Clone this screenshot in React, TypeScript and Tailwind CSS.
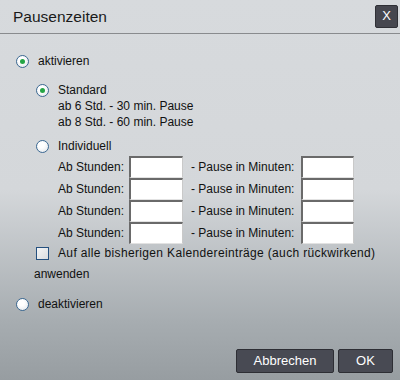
import React from 'react';

const Radio = ({ checked }: { checked?: boolean }) => (
  <span className="flex h-[13px] w-[13px] shrink-0 items-center justify-center rounded-full border border-[#3b6892] bg-[radial-gradient(circle_at_40%_35%,#ffffff_30%,#dfe3e7_100%)]">
    {checked && <span className="h-[5px] w-[5px] rounded-full bg-[#25a545]" />}
  </span>
);

const Field = ({ w }: { w: string }) => (
  <div
    className={`${w} h-[22px] border-t-2 border-l-2 border-r border-b border-t-[#6a6a6a] border-l-[#6a6a6a] border-r-[#c9c9c9] border-b-[#e2e2e2] bg-white`}
  />
);

const HourRow = () => (
  <div className="flex h-[22px] items-center">
    <span className="w-[71px]">Ab Stunden:</span>
    <Field w="w-[54px]" />
    <span className="ml-[8px] w-[110px]">- Pause in Minuten:</span>
    <Field w="w-[53px]" />
  </div>
);

export default function App() {
  return (
    <div className="flex h-[380px] w-[400px] flex-col overflow-hidden bg-[linear-gradient(to_bottom,#d7dadd_0%,#d4d7da_50%,#a6acb0_85%,#979da1_100%)] font-['Liberation_Sans',Arial,sans-serif] text-[12px] text-[#111]">
      {/* title bar */}
      <div className="flex h-[34px] shrink-0 items-center justify-between border-b border-[#898b8e] pl-[13px] pr-[2px]">
        <span className="text-[15.5px] text-[#1a1a1a]">Pausenzeiten</span>
        <button className="mb-[1px] flex h-[23px] w-[23px] items-center justify-center rounded-[2px] border border-[#2f3036] bg-[#46474f] text-[13px] text-white">
          X
        </button>
      </div>

      <div className="flex flex-1 flex-col px-[16px]">
        <div className="mt-[19px] flex h-[16px] items-center gap-[9px]">
          <Radio checked />
          <span>aktivieren</span>
        </div>

        <div className="ml-[20px]">
          <div className="mt-[13px] flex h-[16px] items-center gap-[9px]">
            <Radio checked />
            <span>Standard</span>
          </div>
          <div className="pl-[22px]">
            <div className="flex h-[16px] items-center">ab 6 Std. - 30 min. Pause</div>
            <div className="flex h-[16px] items-center">ab 8 Std. - 60 min. Pause</div>
          </div>

          <div className="mt-[8px] flex h-[16px] items-center gap-[9px]">
            <Radio />
            <span>Individuell</span>
          </div>
          <div className="mt-[2px] pl-[22px]">
            <HourRow />
            <HourRow />
            <HourRow />
            <HourRow />
          </div>

          <div className="mt-[1px] flex h-[16px] items-center gap-[9px]">
            <span className="h-[13px] w-[13px] shrink-0 border border-[#24507f] bg-[linear-gradient(135deg,#f4f5f6,#d9dcdf)]" />
            <span className="tracking-[0.35px]">Auf alle bisherigen Kalendereinträge (auch rückwirkend)</span>
          </div>
        </div>
        <div className="mt-[5px] flex h-[16px] items-center pl-[18px]">anwenden</div>

        <div className="mt-[14px] flex h-[16px] items-center gap-[9px]">
          <Radio />
          <span>deaktivieren</span>
        </div>

        <div className="mt-auto mb-[7px] mr-[-9px] flex justify-end gap-[4px]">
          <button className="flex h-[24px] w-[98px] items-center justify-center rounded-[2px] border border-[#2d2e34] bg-[#484a53] text-[13px] text-white">
            Abbrechen
          </button>
          <button className="flex h-[24px] w-[55px] items-center justify-center rounded-[2px] border border-[#2d2e34] bg-[#484a53] text-[13px] text-white">
            OK
          </button>
        </div>
      </div>
    </div>
  );
}
